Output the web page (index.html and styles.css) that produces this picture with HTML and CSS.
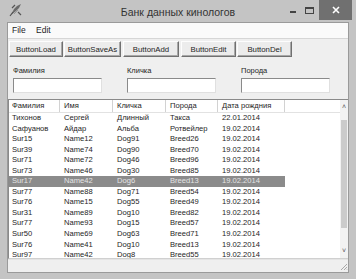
FILE: index.html
```html
<!DOCTYPE html>
<html lang="ru">
<head>
	<meta charset="UTF-8">
	<title>Банк данных кинологов</title>
	<link rel="stylesheet" href="styles.css">
</head>
<body>
	<div class="window">
		<!-- Title bar -->
		<div class="titlebar">
			<div class="app-icon">
				<svg width="14" height="14" viewBox="0 0 14 14">
					<path d="M2 12 L5 6 L8 3 L12 1 L10 5 L7 8 Z" fill="#6a6a6a"/>
					<path d="M1 13 L4 9 M3 5 L6 2 M9 9 L12 12" stroke="#555" stroke-width="1.2" fill="none"/>
					<path d="M5 11 L9 7" stroke="#9a9a9a" stroke-width="1"/>
				</svg>
			</div>
			<div class="title">Банк данных кинологов</div>
			<div class="controls">
				<span class="ctl ctl-min"><i></i></span>
				<span class="ctl ctl-max"><i></i></span>
				<span class="ctl ctl-close">
					<svg width="8" height="8" viewBox="0 0 8 8"><path d="M1 1 L7 7 M7 1 L1 7" stroke="#fff" stroke-width="1.6"/></svg>
				</span>
			</div>
		</div>

		<div class="client">
			<!-- Menu -->
			<div class="menubar">
				<span>File</span>
				<span>Edit</span>
			</div>

			<!-- Buttons -->
			<div class="toolbar">
				<button class="w-load">ButtonLoad</button>
				<button class="w-saveas">ButtonSaveAs</button>
				<button class="w-add">ButtonAdd</button>
				<button class="w-edit">ButtonEdit</button>
				<button class="w-del">ButtonDel</button>
			</div>

			<!-- Filter -->
			<div class="filter">
				<div class="field">
					<label>Фамилия</label>
					<input type="text">
				</div>
				<div class="field">
					<label>Кличка</label>
					<input type="text">
				</div>
				<div class="field">
					<label>Порода</label>
					<input type="text">
				</div>
			</div>

			<!-- List -->
			<div class="listview">
				<div class="list-main">
					<div class="row head">
						<span class="c1">Фамилия</span><span class="c2">Имя</span><span class="c3">Кличка</span><span class="c4">Порода</span><span class="c5">Дата рождния</span>
					</div>
					<div class="row"><span class="c1">Тихонов</span><span class="c2">Сергей</span><span class="c3">Длинный</span><span class="c4">Такса</span><span class="c5">22.01.2014</span></div>
					<div class="row"><span class="c1">Сафуанов</span><span class="c2">Айдар</span><span class="c3">Альба</span><span class="c4">Ротвейлер</span><span class="c5">19.02.2014</span></div>
					<div class="row"><span class="c1">Sur15</span><span class="c2">Name12</span><span class="c3">Dog91</span><span class="c4">Breed26</span><span class="c5">19.02.2014</span></div>
					<div class="row"><span class="c1">Sur39</span><span class="c2">Name74</span><span class="c3">Dog90</span><span class="c4">Breed70</span><span class="c5">19.02.2014</span></div>
					<div class="row"><span class="c1">Sur71</span><span class="c2">Name72</span><span class="c3">Dog46</span><span class="c4">Breed96</span><span class="c5">19.02.2014</span></div>
					<div class="row"><span class="c1">Sur73</span><span class="c2">Name46</span><span class="c3">Dog30</span><span class="c4">Breed85</span><span class="c5">19.02.2014</span></div>
					<div class="row selected"><span class="c1">Sur17</span><span class="c2">Name42</span><span class="c3">Dog6</span><span class="c4">Breed13</span><span class="c5">19.02.2014</span></div>
					<div class="row"><span class="c1">Sur77</span><span class="c2">Name88</span><span class="c3">Dog71</span><span class="c4">Breed54</span><span class="c5">19.02.2014</span></div>
					<div class="row"><span class="c1">Sur76</span><span class="c2">Name15</span><span class="c3">Dog55</span><span class="c4">Breed49</span><span class="c5">19.02.2014</span></div>
					<div class="row"><span class="c1">Sur31</span><span class="c2">Name89</span><span class="c3">Dog10</span><span class="c4">Breed82</span><span class="c5">19.02.2014</span></div>
					<div class="row"><span class="c1">Sur77</span><span class="c2">Name93</span><span class="c3">Dog15</span><span class="c4">Breed57</span><span class="c5">19.02.2014</span></div>
					<div class="row"><span class="c1">Sur50</span><span class="c2">Name69</span><span class="c3">Dog63</span><span class="c4">Breed71</span><span class="c5">19.02.2014</span></div>
					<div class="row"><span class="c1">Sur76</span><span class="c2">Name41</span><span class="c3">Dog10</span><span class="c4">Breed13</span><span class="c5">19.02.2014</span></div>
					<div class="row"><span class="c1">Sur97</span><span class="c2">Name42</span><span class="c3">Dog8</span><span class="c4">Breed55</span><span class="c5">19.02.2014</span></div>
				</div>
				<div class="scrollbar">
					<span class="arrow">&#x2C4;</span>
					<div class="track"><div class="thumb"></div></div>
					<span class="arrow">&#x2C5;</span>
				</div>
			</div>

			<!-- Status -->
			<div class="statusbar">
				<svg class="grip" width="8" height="8" viewBox="0 0 8 8">
					<path d="M7 1 L1 7 M7 4 L4 7 M7 6.5 L6.5 7" stroke="#a8a8a8" stroke-width="1"/>
				</svg>
			</div>
		</div>
	</div>
</body>
</html>
```

FILE: styles.css
```css
body {
	margin: 0;
	background: #c4c4c4;
	font-family: "Liberation Sans", Arial, sans-serif;
	color: #1e1e1e;
}

.window {
	width: 356px;
	height: 279px;
	display: flex;
	flex-direction: column;
	background: #c4c4c4;
}

/* title bar */
.titlebar {
	height: 22px;
	display: grid;
	grid-template-columns: 1fr auto 1fr;
	align-items: center;
}
.app-icon {
	padding: 2px 0 0 9px;
}
.title {
	font-size: 10.5px;
	color: #333;
	padding-top: 2px;
}
.controls {
	justify-self: end;
	display: flex;
	align-self: start;
	margin-right: 4px;
}
.ctl {
	display: flex;
	align-items: center;
	justify-content: center;
	height: 20px;
}
.ctl-min {
	width: 17px;
}
.ctl-min i {
	display: block;
	width: 6px;
	height: 2px;
	margin-top: 4px;
	background: #444;
}
.ctl-max {
	width: 17px;
}
.ctl-max i {
	display: block;
	width: 7px;
	height: 4px;
	border: 1px solid #444;
	border-top-width: 2px;
}
.ctl-close {
	width: 33px;
	background: #707070;
	margin-left: 1px;
}

/* client area */
.client {
	flex: 1;
	margin: 0 7px 6px 7px;
	border: 1px solid #9a9a9a;
	background: #efefef;
	display: flex;
	flex-direction: column;
	min-height: 0;
}

.menubar {
	height: 15px;
	background: #fafafa;
	border-bottom: 1px solid #d6d6d6;
	font-size: 8.5px;
	line-height: 15px;
	padding-left: 4px;
}
.menubar span {
	margin-right: 8px;
}

.toolbar {
	display: flex;
	gap: 1px;
	padding: 2px 0 2px 1px;
	height: 16px;
}
.toolbar button {
	height: 16px;
	padding: 0;
	font-family: "Liberation Sans", Arial, sans-serif;
	font-size: 7.8px;
	color: #1e1e1e;
	background: #ececec;
	border: 1px solid;
	border-color: #fdfdfd #707070 #707070 #fdfdfd;
	box-shadow: inset -1px -1px 0 #a8a8a8;
}
.w-load { width: 54px; }
.w-saveas { width: 57px; }
.w-add { width: 56px; margin-left: 1px; }
.w-edit { width: 55px; margin-left: 1px; }
.w-del { width: 55px; }

.filter {
	display: flex;
	gap: 25px;
	padding: 7px 0 6px 5px;
}
.field {
	display: flex;
	flex-direction: column;
	gap: 2px;
}
.field label {
	font-size: 7.5px;
	line-height: 10px;
}
.field input {
	width: 89px;
	height: 15px;
	box-sizing: border-box;
	margin: 0;
	border: 1px solid;
	border-color: #8a8a8a #e0e0e0 #e0e0e0 #8a8a8a;
	background: #fff;
}

/* list */
.listview {
	flex: 1;
	min-height: 0;
	display: flex;
	background: #fff;
	border-top: 1px solid #8a8a8a;
	border-left: 1px solid #8a8a8a;
	border-bottom: 1px solid #d0d0d0;
	overflow: hidden;
}
.list-main {
	flex: 1;
	overflow: hidden;
}
.row {
	display: flex;
	width: fit-content;
	height: 10.55px;
	line-height: 10.55px;
	font-size: 7.6px;
	white-space: nowrap;
}
.row span {
	padding-left: 4px;
	box-sizing: border-box;
	overflow: hidden;
}
.c1 { width: 51px; padding-left: 3px !important; }
.c2 { width: 53px; }
.c3 { width: 53px; }
.c4 { width: 52px; }
.c5 { width: 67px; }

.row.head {
	width: auto;
	height: 12px;
	line-height: 12px;
	border-bottom: 1px solid #e2e2e2;
}
.row.head span {
	border-right: 1px solid #d2d2d2;
}
.row.selected {
	background: #8b8b8b;
	color: #e4e4e4;
}

.scrollbar {
	width: 8px;
	display: flex;
	flex-direction: column;
	background: #f2f2f2;
}
.scrollbar .arrow {
	height: 14px;
	font-size: 7px;
	line-height: 14px;
	text-align: center;
	color: #555;
}
.track {
	flex: 1;
	padding: 6px 1px 0;
}
.thumb {
	height: 108px;
	background: #cbcbcb;
}

.statusbar {
	height: 12px;
	display: flex;
	justify-content: flex-end;
	align-items: flex-end;
	border-top: 1px solid #e4e4e4;
}
.grip {
	margin: 0 0 1px 0;
}
```
